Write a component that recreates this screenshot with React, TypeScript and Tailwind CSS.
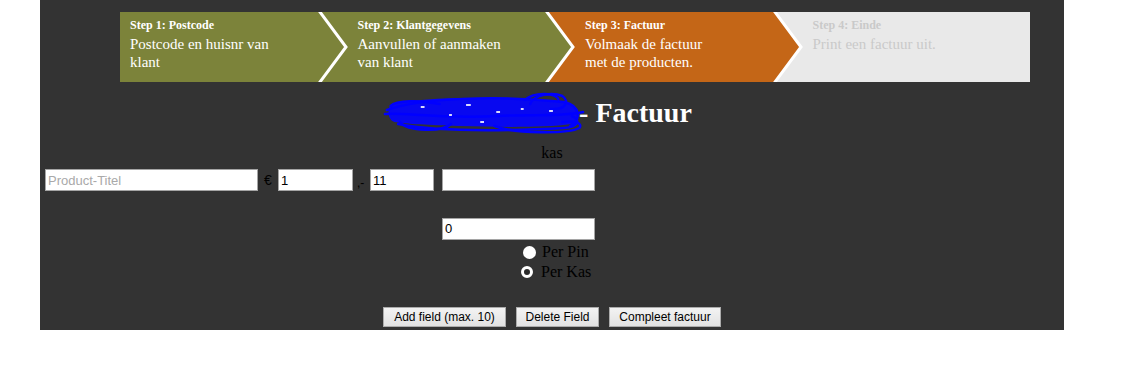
import React from 'react';

type Step = {
  title: string;
  lines: string[];
  bg: string;
  text: string;
  next?: string;
};

const steps: Step[] = [
  { title: 'Step 1: Postcode', lines: ['Postcode en huisnr van', 'klant'], bg: 'bg-[#7c833a]', text: 'text-white', next: '#7c833a' },
  { title: 'Step 2: Klantgegevens', lines: ['Aanvullen of aanmaken', 'van klant'], bg: 'bg-[#7c833a]', text: 'text-white', next: '#c46617' },
  { title: 'Step 3: Factuur', lines: ['Volmaak de factuur', 'met de producten.'], bg: 'bg-[#c46617]', text: 'text-white', next: '#e9e9e9' },
  { title: 'Step 4: Einde', lines: ['Print een factuur uit.'], bg: 'bg-[#e9e9e9]', text: 'text-[#c9c9c9]' },
];

const Chevron: React.FC<{ next: string }> = ({ next }) => (
  <svg className="absolute right-0 top-0 z-10" width="30" height="70" viewBox="0 0 30 70">
    <polygon points="2,0 30,0 30,70 2,70 28,35" fill={next} />
    <polyline points="0.5,-2 28,35 0.5,72" fill="none" stroke="#ffffff" strokeWidth="3" />
  </svg>
);

// blue pen scribble hiding the customer name
const Scribble: React.FC = () => (
  <svg
    className="absolute left-[-29px] top-[-4px]"
    width="202"
    height="44"
    viewBox="0 0 214 44"
    preserveAspectRatio="none"
  >
    <path
      d="M10 12 C40 6 90 5 130 7 C160 8 185 9 200 12 C208 16 208 28 200 32 C170 36 120 35 80 34 C50 33 24 32 12 30 C4 27 4 15 10 12 Z"
      fill="#0808f0"
    />
    <g fill="none" stroke="#0000ff" strokeWidth="2.5" strokeLinecap="round">
      <path d="M4 18 C40 6 120 3 192 10 C210 14 210 28 198 34" />
      <path d="M16 32 C60 40 130 39 192 36 C207 35 210 28 200 24" />
      <path d="M156 12 C160 2 180 0 190 4 C198 9 194 18 178 17" />
      <path d="M150 8 C162 -1 184 1 186 8" />
      <path d="M18 30 C26 40 64 40 72 32" />
      <path d="M118 34 C140 42 196 42 208 36 C212 32 204 28 190 30" />
      <path d="M2 22 C20 20 60 27 120 24 C160 22 190 25 212 20" />
      <path d="M8 14 C14 8 40 8 60 12" />
    </g>
    <g fill="#ffffff" opacity="0.85">
      <rect x="40" y="14" width="4" height="2" />
      <rect x="88" y="12" width="5" height="2" />
      <rect x="120" y="19" width="4" height="2" />
      <rect x="70" y="22" width="3" height="2" />
      <rect x="176" y="18" width="4" height="2" />
      <rect x="103" y="29" width="4" height="2" />
      <rect x="146" y="16" width="3" height="2" />
    </g>
  </svg>
);

const inputCls =
  "h-[22px] border border-[#a5a5a5] bg-white px-[2px] text-[13px] text-black font-['Liberation_Sans',Arial,sans-serif] outline-none placeholder:text-[#a9a9a9]";

const btnCls =
  "h-[20px] border border-[#acacac] bg-gradient-to-b from-[#f3f3f3] to-[#e2e2e2] px-[7px] text-[12px] leading-none text-black font-['Liberation_Sans',Arial,sans-serif]";

export default function App() {
  return (
    <div className="w-[1124px] h-[380px] bg-white">
      <div className="ml-[40px] w-[1024px] h-[330px] bg-[#333333] pt-[12px] font-['Liberation_Serif',serif]">
        <div className="ml-[80px] w-[910px] h-[70px] flex">
          {steps.map((s) => (
            <div key={s.title} className={`relative flex-1 h-full ${s.bg} ${s.text} pl-[10px] pt-[6px]`}>
              <div className="text-[12px] leading-[14px] font-bold">{s.title}</div>
              <div className="mt-[3px] text-[15px] leading-[18px]">
                {s.lines.map((l) => (
                  <div key={l}>{l}</div>
                ))}
              </div>
              {s.next && <Chevron next={s.next} />}
            </div>
          ))}
        </div>

        <h1 className="mt-[14px] text-center text-[28px] leading-[34px] font-bold text-white">
          <span className="relative inline-block w-[160px] h-[34px] align-top">
            <Scribble />
          </span>
          {' - Factuur'}
        </h1>

        <div className="mt-[14px] text-center text-[16px] leading-[18px] text-black">kas</div>

        <div className="mt-[7px] flex items-center pl-[5px]">
          <input className={`${inputCls} w-[213px]`} placeholder="Product-Titel" defaultValue="" />
          <span className="ml-[6px] w-[14px] text-[14px] text-black font-['Liberation_Sans',Arial,sans-serif]">€</span>
          <input className={`${inputCls} w-[75px] text-[#1a0a80]`} defaultValue="1" />
          <span className="ml-[4px] w-[13px] self-end pb-[1px] text-[12px] leading-[14px] text-black font-['Liberation_Sans',Arial,sans-serif]">,-</span>
          <input className={`${inputCls} w-[64px] text-[#1a0a80]`} defaultValue="11" />
          <input className={`${inputCls} ml-[8px] w-[153px]`} defaultValue="" />
        </div>

        <div className="mt-[25px] pl-[402px]">
          <input className={`${inputCls} w-[153px]`} defaultValue="0" />
        </div>

        <div className="mt-[2px] text-[16px] leading-[20px] text-black">
          <label className="flex items-center pl-[483px]">
            <span className="inline-block w-[13px] h-[13px] rounded-full bg-white" />
            <span className="ml-[6px]">Per Pin</span>
          </label>
          <label className="flex items-center pl-[481px]">
            <span className="inline-block w-[12px] h-[12px] rounded-full border-[3px] border-white bg-[#2a2a2a]" />
            <span className="ml-[8px]">Per Kas</span>
          </label>
        </div>

        <div className="mt-[25px] flex justify-center gap-[10px]">
          <button className={`${btnCls} w-[123px]`}>Add field (max. 10)</button>
          <button className={`${btnCls} w-[83px]`}>Delete Field</button>
          <button className={`${btnCls} w-[112px]`}>Compleet factuur</button>
        </div>
      </div>
    </div>
  );
}
